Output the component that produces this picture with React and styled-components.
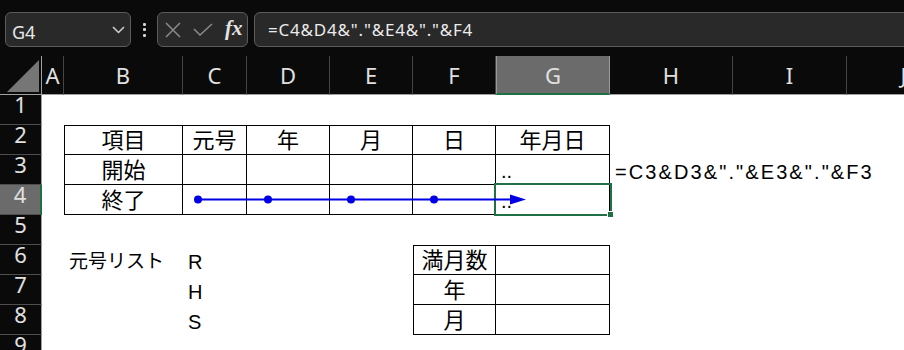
import React from 'react';
import styled, { createGlobalStyle } from 'styled-components';

const GlobalStyle = createGlobalStyle`
  html, body {
    margin: 0;
    padding: 0;
    background: #0a0a0a;
    overflow: hidden;
  }
`;

const COLS = ['A', 'B', 'C', 'D', 'E', 'F', 'G', 'H', 'I', 'J'];
const WIDTHS = [22, 119, 64, 83, 83, 83, 114, 123, 114, 114];
const ROWS = [1, 2, 3, 4, 5, 6, 7, 8, 9];
const ACTIVE = 'G4';
const GREEN = '#1f7145';

// table ranges that get thin black borders
const TABLES = [
  { c1: 'B', c2: 'G', r1: 2, r2: 4 },
  { c1: 'F', c2: 'G', r1: 6, r2: 8 },
];

const CELLS = {
  B2: { text: '項目', align: 'center', jp: true },
  C2: { text: '元号', align: 'center', jp: true },
  D2: { text: '年', align: 'center', jp: true },
  E2: { text: '月', align: 'center', jp: true },
  F2: { text: '日', align: 'center', jp: true },
  G2: { text: '年月日', align: 'center', jp: true },
  B3: { text: '開始', align: 'center', jp: true },
  G3: { text: '..' },
  H3: { text: '=C3&D3&"."&E3&"."&F3', spacing: 2.1 },
  B4: { text: '終了', align: 'center', jp: true },
  G4: { text: '..' },
  B6: { text: '元号リスト', size: 19 },
  C6: { text: 'R' },
  C7: { text: 'H' },
  C8: { text: 'S' },
  F6: { text: '満月数', align: 'center', jp: true },
  F7: { text: '年', align: 'center', jp: true },
  F8: { text: '月', align: 'center', jp: true },
};

const Page = styled.div`
  width: 904px;
  height: 350px;
  overflow: hidden;
  background: #0a0a0a;
  font-family: "Noto Sans", sans-serif;
`;

const TopBar = styled.div`
  height: 56px;
  box-sizing: border-box;
  padding: 12px 0 0 5px;
  display: flex;
  align-items: flex-start;
`;

const Box = styled.div`
  height: 35px;
  box-sizing: border-box;
  background: #292929;
  border: 1px solid #5c5c5c;
  border-radius: 6px;
  display: flex;
  align-items: center;
`;

const NameBox = styled(Box)`
  width: 126px;
  padding: 4px 5px 0 6px;
  justify-content: space-between;
  color: #e6e6e6;
  font-size: 18px;
  svg { margin-top: -4px; }
`;

const Grip = styled.div`
  width: 26px;
  height: 35px;
  display: flex;
  flex-direction: column;
  align-items: center;
  justify-content: center;
  gap: 2.5px;
  span {
    width: 3px;
    height: 3px;
    border-radius: 1px;
    background: #d0d0d0;
  }
`;

const FxBox = styled(Box)`
  width: 91px;
  padding-left: 7px;
  gap: 12px;
`;

const FxLabel = styled.span`
  font-family: "Liberation Serif", serif;
  font-style: italic;
  font-weight: bold;
  font-size: 21px;
  color: #e4e4e4;
  margin-top: -2px;
`;

const FormulaBox = styled(Box)`
  flex: 1;
  margin-left: 6px;
  margin-right: -20px;
  padding-left: 13px;
  color: #ececec;
  font-size: 17px;
  letter-spacing: 0.8px;
`;

const Sheet = styled.div`
  position: relative;
  display: grid;
  grid-template-columns: 42px ${WIDTHS.map((w) => `${w}px`).join(' ')};
  grid-template-rows: 39px repeat(${ROWS.length}, 30px);
  background: #fff;
`;

const Corner = styled.div`
  background: #0a0a0a;
  border-right: 1px solid #a0a0a0;
  border-bottom: 1px solid #a0a0a0;
  box-sizing: border-box;
  padding: 4px 2px 0 7px;
  &::before {
    content: '';
    display: block;
    width: 32px;
    height: 32px;
    background: #767676;
    clip-path: polygon(100% 0, 100% 100%, 0 100%);
  }
`;

const ColHead = styled.div`
  box-sizing: border-box;
  background: ${(p) => (p.$active ? '#6b6b6b' : '#0a0a0a')};
  color: #e0e0e0;
  font-size: 22px;
  display: flex;
  align-items: center;
  justify-content: center;
  border-left: ${(p) => (p.$active ? '1px solid #9a9a9a' : 'none')};
  border-right: 1px solid ${(p) => (p.$active ? '#9a9a9a' : '#454545')};
  border-bottom: ${(p) => (p.$active ? `2px solid ${GREEN}` : '1px solid #a0a0a0')};
`;

const RowHead = styled.div`
  box-sizing: border-box;
  background: ${(p) => (p.$active ? '#6b6b6b' : '#0a0a0a')};
  color: #e0e0e0;
  font-size: 22px;
  line-height: 18px;
  text-align: center;
  border-bottom: 1px solid #4e4e4e;
  border-right: ${(p) => (p.$active ? `2px solid ${GREEN}` : '1px solid #a0a0a0')};
`;

const line = '1px solid #000';

const Cell = styled.div`
  position: ${(p) => (p.$selected ? 'relative' : 'static')};
  box-sizing: border-box;
  display: flex;
  align-items: flex-end;
  justify-content: ${(p) => (p.$align === 'center' ? 'center' : 'flex-start')};
  padding: 0 5px 1px;
  white-space: nowrap;
  font-family: "Liberation Sans", "Noto Sans CJK JP", sans-serif;
  font-size: ${(p) => p.$size}px;
  line-height: 24px;
  letter-spacing: ${(p) => p.$spacing || 0}px;
  color: #000;
  border-top: ${(p) => (p.$bt ? line : 'none')};
  border-left: ${(p) => (p.$bl ? line : 'none')};
  border-right: ${(p) => (p.$br ? line : 'none')};
  border-bottom: ${(p) => (p.$bb ? line : 'none')};

  ${(p) =>
    p.$selected &&
    `
    &::after {
      content: '';
      position: absolute;
      top: -2px;
      left: -2px;
      right: -3px;
      bottom: -2px;
      border: 2px solid ${GREEN};
    }
    &::before {
      content: '';
      position: absolute;
      right: -5px;
      bottom: -4px;
      width: 5px;
      height: 5px;
      background: ${GREEN};
      border: 1px solid #fff;
      z-index: 1;
    }
  `}
`;

const Trace = styled.svg`
  position: absolute;
  left: 0;
  top: 0;
  pointer-events: none;
`;

function borderFor(col, row) {
  const ci = COLS.indexOf(col);
  for (const t of TABLES) {
    const a = COLS.indexOf(t.c1);
    const b = COLS.indexOf(t.c2);
    if (ci >= a && ci <= b && row >= t.r1 && row <= t.r2) {
      return { $bt: row === t.r1, $bl: ci === a, $br: true, $bb: true };
    }
  }
  return {};
}

const App = () => {
  const activeCol = ACTIVE[0];
  const activeRow = Number(ACTIVE.slice(1));
  const dots = [198, 268, 351, 434];

  return (
    <Page>
      <GlobalStyle />
      <TopBar>
        <NameBox>
          <span>{ACTIVE}</span>
          <svg width="13" height="8" viewBox="0 0 13 8">
            <polyline points="1,1 6.5,6.5 12,1" fill="none" stroke="#d0d0d0" strokeWidth="1.5" />
          </svg>
        </NameBox>
        <Grip>
          <span />
          <span />
          <span />
        </Grip>
        <FxBox>
          <svg width="16" height="16" viewBox="0 0 16 16">
            <path d="M1 1 L15 15 M15 1 L1 15" stroke="#8a8a8a" strokeWidth="1.5" />
          </svg>
          <svg width="20" height="13" viewBox="0 0 20 13">
            <polyline points="1,6 7,12 19,1" fill="none" stroke="#8a8a8a" strokeWidth="1.5" />
          </svg>
          <FxLabel>fx</FxLabel>
        </FxBox>
        <FormulaBox>=C4&amp;D4&amp;"."&amp;E4&amp;"."&amp;F4</FormulaBox>
      </TopBar>

      <Sheet>
        <Corner />
        {COLS.map((c) => (
          <ColHead key={c} $active={c === activeCol}>
            {c}
          </ColHead>
        ))}
        {ROWS.map((r) => (
          <React.Fragment key={r}>
            <RowHead $active={r === activeRow}>{r}</RowHead>
            {COLS.map((c) => {
              const id = `${c}${r}`;
              const cell = CELLS[id] || {};
              return (
                <Cell
                  key={id}
                  $align={cell.align}
                  $size={cell.size || (cell.jp ? 22 : 20)}
                  $spacing={cell.spacing}
                  $selected={id === ACTIVE}
                  {...borderFor(c, r)}
                >
                  {cell.text}
                </Cell>
              );
            })}
          </React.Fragment>
        ))}

        <Trace width="904" height="294">
          <line x1="198" y1="143.5" x2="512" y2="143.5" stroke="#0000e6" strokeWidth="2" />
          {dots.map((x) => (
            <circle key={x} cx={x} cy="143.5" r="4" fill="#0000e6" />
          ))}
          <polygon points="510,138.5 526,143.5 510,148.5" fill="#0000e6" />
        </Trace>
      </Sheet>
    </Page>
  );
};

export default App;
